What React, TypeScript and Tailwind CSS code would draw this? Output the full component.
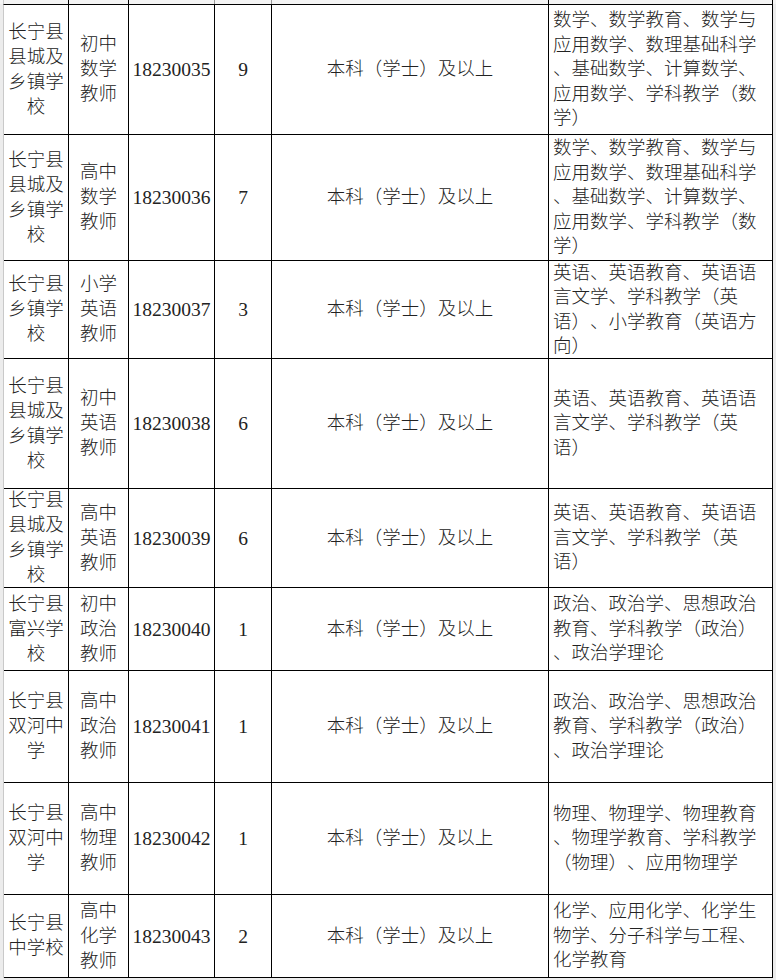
import React from 'react'

type Row = {
  h: string
  unit: string[]
  post: string[]
  code: string
  num: string
  major: string[]
}

const rows: Row[] = [
  {
    h: 'h-[130px]',
    unit: ['长宁县', '县城及', '乡镇学', '校'],
    post: ['初中', '数学', '教师'],
    code: '18230035',
    num: '9',
    major: ['数学、数学教育、数学与', '应用数学、数理基础科学', '、基础数学、计算数学、', '应用数学、学科教学（数', '学）'],
  },
  {
    h: 'h-[126px]',
    unit: ['长宁县', '县城及', '乡镇学', '校'],
    post: ['高中', '数学', '教师'],
    code: '18230036',
    num: '7',
    major: ['数学、数学教育、数学与', '应用数学、数理基础科学', '、基础数学、计算数学、', '应用数学、学科教学（数', '学）'],
  },
  {
    h: 'h-[98px]',
    unit: ['长宁县', '乡镇学', '校'],
    post: ['小学', '英语', '教师'],
    code: '18230037',
    num: '3',
    major: ['英语、英语教育、英语语', '言文学、学科教学（英', '语）、小学教育（英语方', '向）'],
  },
  {
    h: 'h-[130px]',
    unit: ['长宁县', '县城及', '乡镇学', '校'],
    post: ['初中', '英语', '教师'],
    code: '18230038',
    num: '6',
    major: ['英语、英语教育、英语语', '言文学、学科教学（英', '语）'],
  },
  {
    h: 'h-[99px]',
    unit: ['长宁县', '县城及', '乡镇学', '校'],
    post: ['高中', '英语', '教师'],
    code: '18230039',
    num: '6',
    major: ['英语、英语教育、英语语', '言文学、学科教学（英', '语）'],
  },
  {
    h: 'h-[83px]',
    unit: ['长宁县', '富兴学', '校'],
    post: ['初中', '政治', '教师'],
    code: '18230040',
    num: '1',
    major: ['政治、政治学、思想政治', '教育、学科教学（政治）', '、政治学理论'],
  },
  {
    h: 'h-[112px]',
    unit: ['长宁县', '双河中', '学'],
    post: ['高中', '政治', '教师'],
    code: '18230041',
    num: '1',
    major: ['政治、政治学、思想政治', '教育、学科教学（政治）', '、政治学理论'],
  },
  {
    h: 'h-[112px]',
    unit: ['长宁县', '双河中', '学'],
    post: ['高中', '物理', '教师'],
    code: '18230042',
    num: '1',
    major: ['物理、物理学、物理教育', '、物理学教育、学科教学', '（物理）、应用物理学'],
  },
  {
    h: 'h-[83px]',
    unit: ['长宁县', '中学校'],
    post: ['高中', '化学', '教师'],
    code: '18230043',
    num: '2',
    major: ['化学、应用化学、化学生', '物学、分子科学与工程、', '化学教育'],
  },
]

const cell = 'flex shrink-0 flex-col justify-center border-r border-black overflow-visible'

function Lines({ lines }: { lines: string[] }) {
  return (
    <>
      {lines.map((l, i) => (
        <div key={i} className="whitespace-nowrap">{l}</div>
      ))}
    </>
  )
}

export default function App() {
  return (
    <div
      className="w-[776px] h-[980px] bg-[#ececec] overflow-hidden text-[#222] [text-spacing-trim:space-all]"
      style={{ fontFamily: '"Liberation Serif", "Noto Sans CJK SC", serif' }}
    >
      <div className="flex h-[4px] bg-[#f4f4f4]">
        <div className="w-[4px] shrink-0 border-r border-[#c9c9c9]" />
        <div className="w-[65px] shrink-0 border-r border-black" />
        <div className="w-[60px] shrink-0 border-r border-black" />
        <div className="w-[86px] shrink-0 border-r border-[#999]" />
        <div className="w-[57px] shrink-0 border-r border-[#999]" />
        <div className="w-[277px] shrink-0 border-r border-black" />
        <div className="w-[224px] shrink-0 border-r border-black" />
      </div>
      <div className="ml-[3px] w-[770px] border-t border-l border-t-black border-l-[#c9c9c9] bg-white">
        {rows.map((r) => (
          <div key={r.code} className={`flex border-b border-black ${r.h}`}>
            <div className={`${cell} w-[65px] items-center text-[18.5px] leading-[25px] font-light`}>
              <Lines lines={r.unit} />
            </div>
            <div className={`${cell} w-[60px] items-center text-[18.5px] leading-[25px] font-light`}>
              <Lines lines={r.post} />
            </div>
            <div className={`${cell} w-[86px] items-center text-[19.5px] leading-[25px]`}>
              {r.code}
            </div>
            <div className={`${cell} w-[57px] items-center text-[19.5px] leading-[25px]`}>
              {r.num}
            </div>
            <div className={`${cell} w-[277px] items-center text-[18.5px] leading-[25px] font-light`}>
              本科（学士）及以上
            </div>
            <div className={`${cell} w-[224px] items-start pl-[4px] text-[18.5px] leading-[24.5px] font-light`}>
              <Lines lines={r.major} />
            </div>
          </div>
        ))}
      </div>
    </div>
  )
}
